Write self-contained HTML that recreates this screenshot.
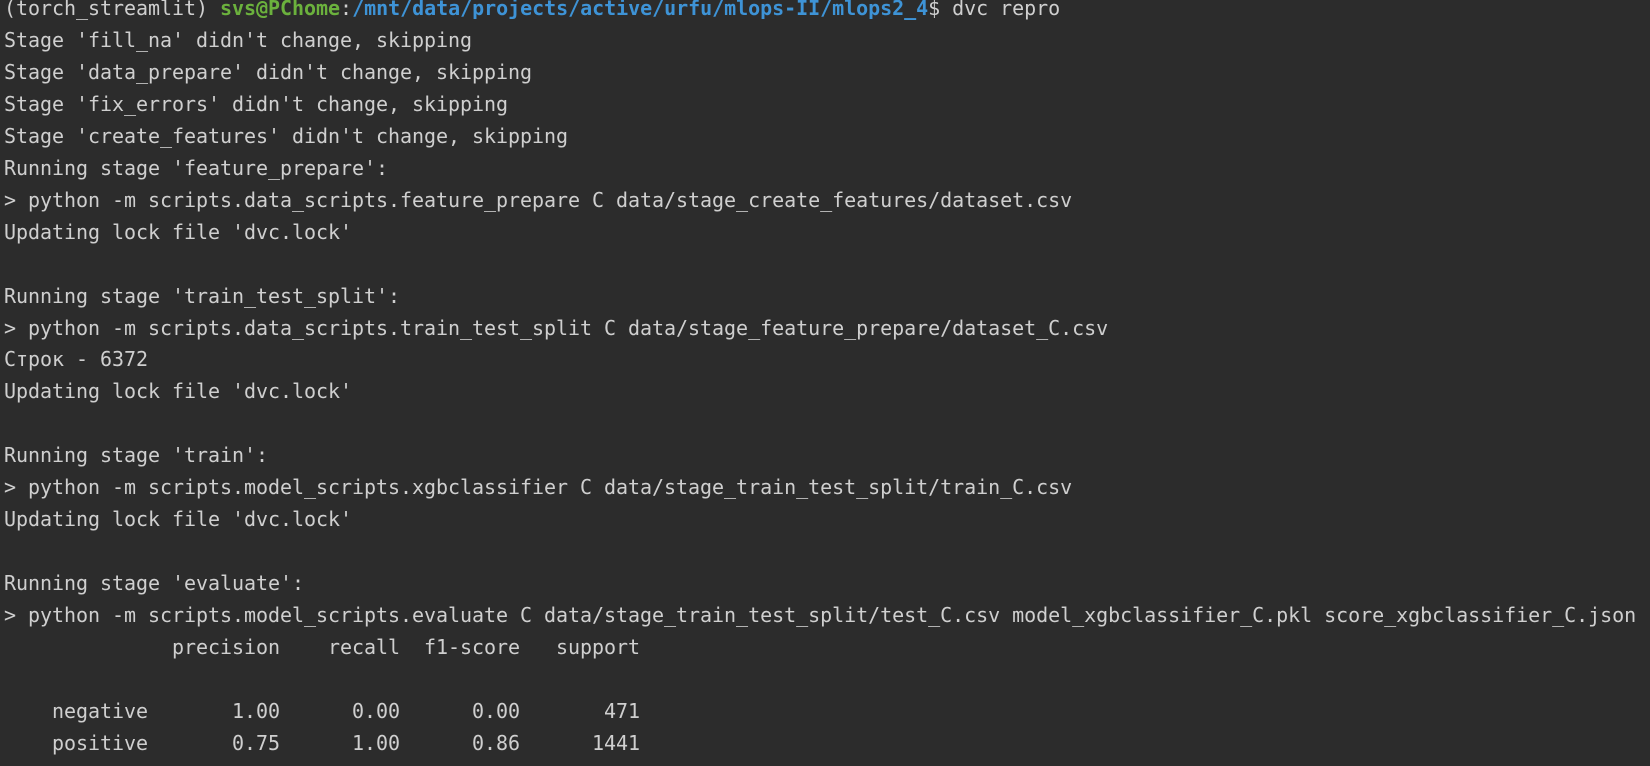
<!DOCTYPE html>
<html><head><meta charset="utf-8"><style>
html,body{margin:0;padding:0;background:#2c2c2c;width:1650px;height:766px;overflow:hidden}
pre{margin:0;position:absolute;left:4px;top:-7px;font-family:"DejaVu Sans Mono","Liberation Mono",monospace;font-size:20px;line-height:31.95px;letter-spacing:-0.04px;color:#cfcfcf;white-space:pre}
.g{color:#6bb13d;font-weight:bold}.b{color:#3e93d6;font-weight:bold}
</style></head><body><pre>(torch_streamlit) <span class="g">svs@PChome</span>:<span class="b">/mnt/data/projects/active/urfu/mlops-II/mlops2_4</span>$ dvc repro
Stage 'fill_na' didn't change, skipping
Stage 'data_prepare' didn't change, skipping
Stage 'fix_errors' didn't change, skipping
Stage 'create_features' didn't change, skipping
Running stage 'feature_prepare':
&gt; python -m scripts.data_scripts.feature_prepare C data/stage_create_features/dataset.csv
Updating lock file 'dvc.lock'

Running stage 'train_test_split':
&gt; python -m scripts.data_scripts.train_test_split C data/stage_feature_prepare/dataset_C.csv
Строк - 6372
Updating lock file 'dvc.lock'

Running stage 'train':
&gt; python -m scripts.model_scripts.xgbclassifier C data/stage_train_test_split/train_C.csv
Updating lock file 'dvc.lock'

Running stage 'evaluate':
&gt; python -m scripts.model_scripts.evaluate C data/stage_train_test_split/test_C.csv model_xgbclassifier_C.pkl score_xgbclassifier_C.json
              precision    recall  f1-score   support

    negative       1.00      0.00      0.00       471
    positive       0.75      1.00      0.86      1441
</pre></body></html>
